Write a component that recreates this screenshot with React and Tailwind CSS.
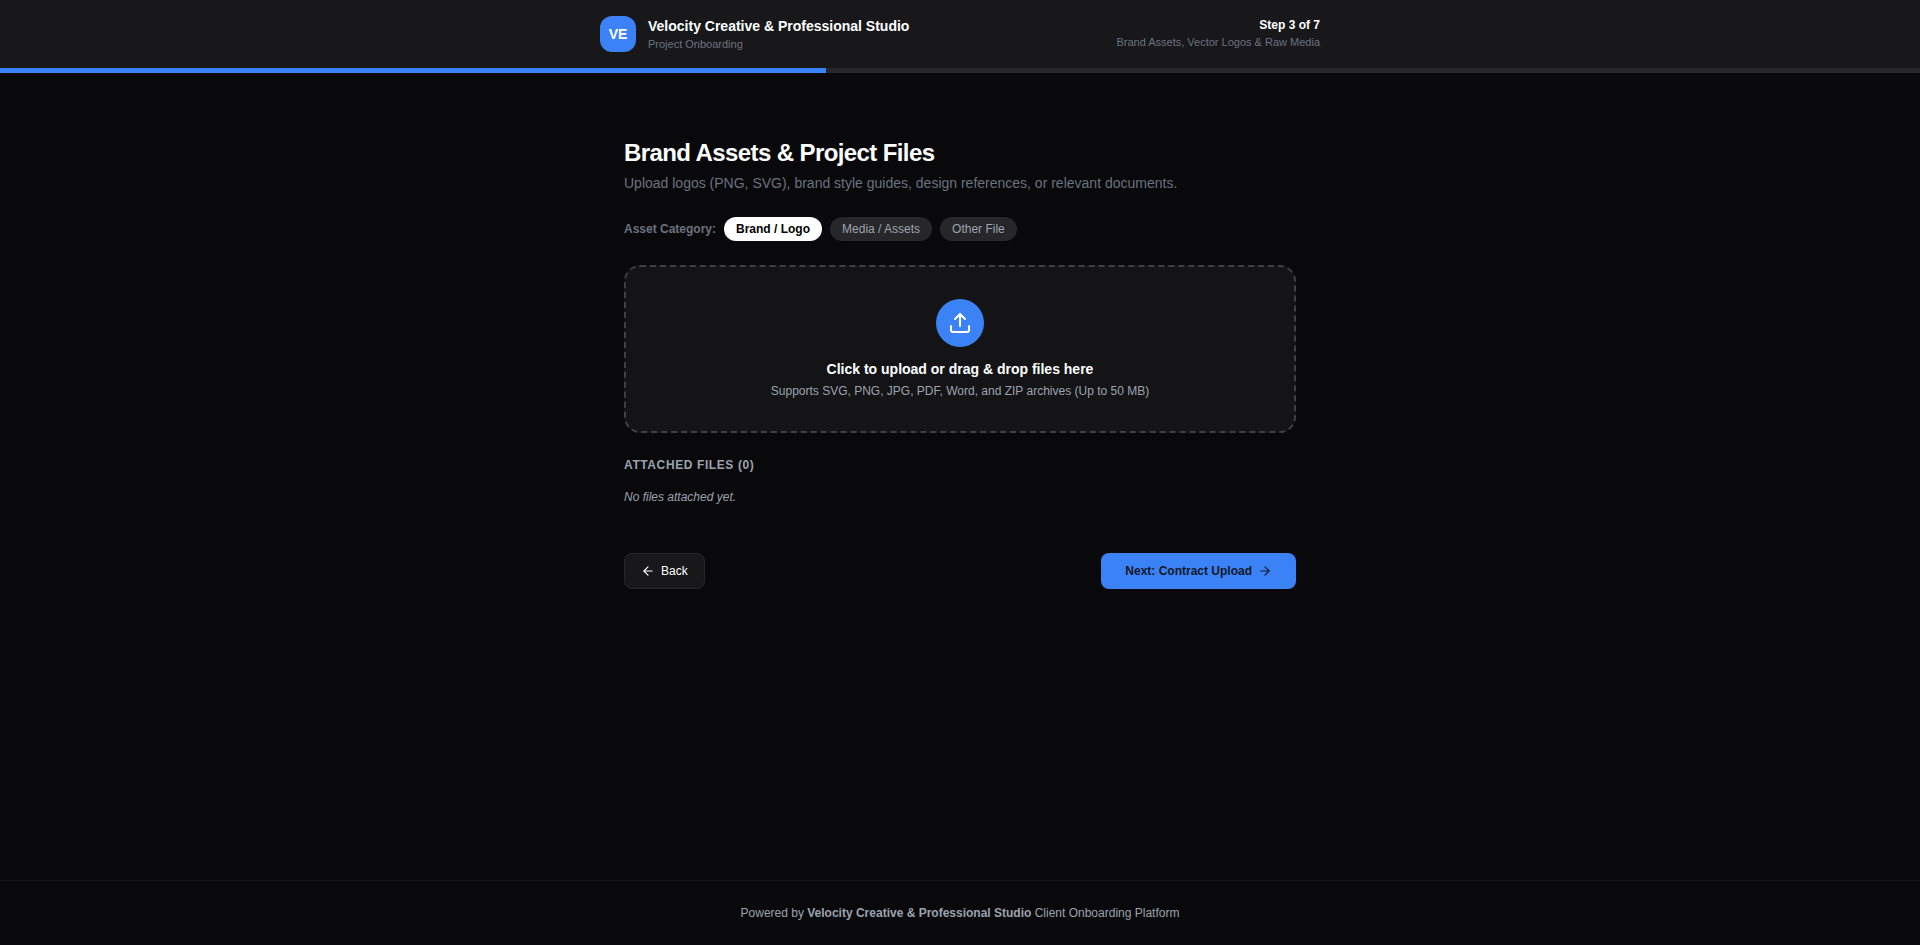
import { Upload, ArrowLeft, ArrowRight } from "lucide-react";

const App = () => {
  return (
    <div className="min-h-screen flex flex-col bg-[#09090b] text-white font-['Liberation_Sans',Arial,sans-serif]">
      <header className="bg-[#18181b]">
        <div className="max-w-[720px] mx-auto h-[68px] flex items-center justify-between">
          <div className="flex items-center gap-3">
            <div className="w-9 h-9 rounded-xl bg-[#3b82f6] flex items-center justify-center text-sm font-bold">VE</div>
            <div>
              <h1 className="text-sm font-bold leading-[19px]">Velocity Creative &amp; Professional Studio</h1>
              <p className="text-[11px] leading-4 text-[#6b7280]">Project Onboarding</p>
            </div>
          </div>
          <div className="text-right pb-[1px]">
            <p className="text-xs font-bold leading-4">Step 3 of 7</p>
            <p className="mt-[1px] text-[11px] leading-4 text-[#6b7280]">Brand Assets, Vector Logos &amp; Raw Media</p>
          </div>
        </div>
        <div className="h-[5px] bg-[#27272a]">
          <div className="h-full w-[43%] bg-[#3b82f6]"></div>
        </div>
      </header>

      <main className="flex-1 w-full max-w-[672px] mx-auto pt-[64px]">
        <h2 className="text-2xl font-bold tracking-tight">Brand Assets &amp; Project Files</h2>
        <p className="mt-1 text-sm leading-5 text-[#6b7280]">
          Upload logos (PNG, SVG), brand style guides, design references, or relevant documents.
        </p>

        <div className="mt-6 flex items-center gap-2">
          <span className="text-xs font-bold text-[#6b7280]">Asset Category:</span>
          <button className="h-6 px-3 rounded-full bg-white text-black text-xs font-bold">Brand / Logo</button>
          <button className="h-6 px-3 rounded-full bg-[#27272a] text-[#9ca3af] text-xs">Media / Assets</button>
          <button className="h-6 px-3 rounded-full bg-[#27272a] text-[#9ca3af] text-xs">Other File</button>
        </div>

        <div className="mt-6 p-8 rounded-2xl border-2 border-dashed border-[#3f3f46] bg-[#141416] flex flex-col items-center">
          <div className="w-12 h-12 rounded-full bg-[#3b82f6] flex items-center justify-center">
            <Upload size={24} strokeWidth={2} />
          </div>
          <p className="mt-3 text-sm font-bold">Click to upload or drag &amp; drop files here</p>
          <p className="mt-1 text-xs text-[#9ca3af]">Supports SVG, PNG, JPG, PDF, Word, and ZIP archives (Up to 50 MB)</p>
        </div>

        <h3 className="mt-6 text-xs font-bold tracking-wider text-[#9ca3af]">ATTACHED FILES (0)</h3>
        <p className="mt-4 text-xs italic text-[#9ca3af]">No files attached yet.</p>

        <div className="mt-12 flex items-center justify-between">
          <button className="h-9 px-4 rounded-lg border border-[#27272a] bg-[#18181b] text-xs font-medium flex items-center gap-1.5">
            <ArrowLeft size={14} />
            Back
          </button>
          <button className="h-9 px-6 rounded-lg bg-[#3b82f6] text-[#111827] text-xs font-bold flex items-center gap-1.5">
            Next: Contract Upload
            <ArrowRight size={14} />
          </button>
        </div>
      </main>

      <footer className="border-t border-[#18181b] py-6 text-center text-xs text-[#9ca3af]">
        Powered by <span className="font-bold">Velocity Creative &amp; Professional Studio</span> Client Onboarding Platform
      </footer>
    </div>
  );
};

export default App;
